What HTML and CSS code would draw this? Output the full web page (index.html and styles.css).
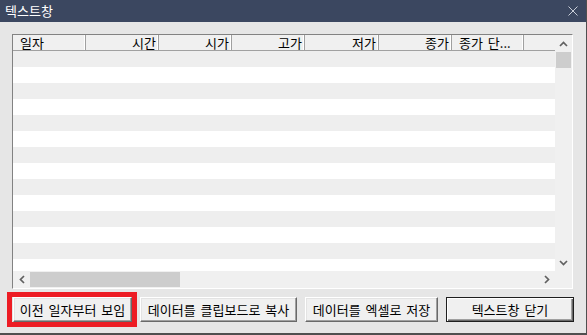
FILE: index.html
```html
<!DOCTYPE html>
<html>
  <head>
    <title>텍스트창</title>
    <link rel="stylesheet" href="styles.css">
  </head>
  <body>
    <div class="window">
      <div class="titlebar">
        <span class="title">텍스트창</span>
        <svg class="close" width="10" height="10" viewBox="0 0 10 10">
          <path d="M0.5 0.5 L9.5 9.5 M9.5 0.5 L0.5 9.5" stroke="#c9ced8" stroke-width="1" fill="none" />
        </svg>
      </div>
      <div class="dialog">
        <div class="listbox">
          <div class="list-main">
            <div class="list-header">
              <div class="col w73 left">일자</div>
              <div class="col w73">시간</div>
              <div class="col w73">시가</div>
              <div class="col w73">고가</div>
              <div class="col w74">저가</div>
              <div class="col w73">종가</div>
              <div class="col w72 left">종가 단...</div>
              <div class="col fill"></div>
            </div>
            <div class="rows">
              <div class="row"></div>
              <div class="row"></div>
              <div class="row"></div>
              <div class="row"></div>
              <div class="row"></div>
              <div class="row"></div>
              <div class="row"></div>
              <div class="row"></div>
              <div class="row"></div>
              <div class="row"></div>
              <div class="row"></div>
              <div class="row"></div>
              <div class="row"></div>
              <div class="row"></div>
            </div>
          </div>
          <div class="vscroll">
            <div class="arrow">
              <svg width="9" height="6" viewBox="0 0 9 6"><polyline points="1,5 4.5,1.5 8,5" stroke="#606060" stroke-width="1.7" fill="none" /></svg>
            </div>
            <div class="vthumb"></div>
            <div class="track"></div>
            <div class="arrow">
              <svg width="9" height="6" viewBox="0 0 9 6"><polyline points="1,1 4.5,4.5 8,1" stroke="#606060" stroke-width="1.7" fill="none" /></svg>
            </div>
          </div>
          <div class="hscroll">
            <div class="arrow">
              <svg width="6" height="9" viewBox="0 0 6 9"><polyline points="5,1 1.5,4.5 5,8" stroke="#606060" stroke-width="1.7" fill="none" /></svg>
            </div>
            <div class="hthumb"></div>
            <div class="track"></div>
            <div class="arrow">
              <svg width="6" height="9" viewBox="0 0 6 9"><polyline points="1,1 4.5,4.5 1,8" stroke="#606060" stroke-width="1.7" fill="none" /></svg>
            </div>
          </div>
          <div class="corner"></div>
        </div>
        <div class="buttons">
          <span class="highlight">
            <button class="btn w119">이전 일자부터 보임</button>
          </span>
          <button class="btn w157">데이터를 클립보드로 복사</button>
          <button class="btn w133">데이터를 엑셀로 저장</button>
          <button class="btn btn-default w128">텍스트창 닫기</button>
        </div>
      </div>
    </div>
  </body>
</html>
```

FILE: styles.css
```css
body {
  margin: 0;
  font-family: "Noto Sans CJK KR", "Noto Sans", sans-serif;
  font-size: 13px;
  word-spacing: 2px;
  color: #000;
  background: #e6e6e6;
}
.window {
  width: 586px;
  height: 333px;
  display: flex;
  flex-direction: column;
  background: #e6e6e6;
  border-right: 1px solid #4f4f4f;
  border-bottom: 2px solid #4f4f4f;
}
.titlebar {
  height: 22px;
  flex: none;
  background: #3b4760;
  color: #fff;
  display: flex;
  align-items: center;
  justify-content: space-between;
  padding: 0 8px 0 5px;
}
.title {
  font-size: 13px;
  line-height: 22px;
}
.dialog {
  flex: 1;
  padding: 12px 0 0 12px;
}
.listbox {
  width: 559px;
  height: 253px;
  border: 1px solid;
  border-color: #828282 #fff #fff #828282;
  display: grid;
  grid-template-columns: 542px 17px;
  grid-template-rows: 236px 17px;
  background: #fff;
}
.list-main {
  display: flex;
  flex-direction: column;
  min-height: 0;
}
.list-header {
  display: flex;
  height: 15px;
  flex: none;
  border-bottom: 1px solid #a0a0a0;
  background: #f0f0f0;
}
.col {
  height: 15px;
  line-height: 16px;
  text-align: right;
  padding-right: 3px;
  box-sizing: border-box;
  white-space: nowrap;
  box-shadow: inset -1px 0 #a0a0a0, inset -2px 0 #fff;
}
.col.left {
  text-align: left;
  padding-left: 7px;
}
.col.fill {
  width: 31px;
  box-shadow: none;
}
.w72 { width: 72px; }
.w73 { width: 73px; }
.w74 { width: 74px; }
.rows {
  flex: 1;
  min-height: 0;
  overflow: hidden;
}
.row {
  height: 16px;
  background: #fff;
}
.row:nth-child(odd) {
  background: #eeeeee;
}
.vscroll {
  display: flex;
  flex-direction: column;
  background: #f0f0f0;
}
.hscroll {
  display: flex;
  background: #f0f0f0;
}
.arrow {
  width: 17px;
  height: 17px;
  flex: none;
  display: flex;
  align-items: center;
  justify-content: center;
}
.vthumb {
  height: 16px;
  margin: 0 1px;
  background: #cdcdcd;
}
.hthumb {
  width: 150px;
  margin: 1px 0;
  background: #cdcdcd;
}
.track {
  flex: 1;
}
.corner {
  background: #f0f0f0;
}
.buttons {
  display: flex;
  gap: 8px;
  margin-top: 8px;
  padding-left: 1px;
}
.highlight {
  position: relative;
  display: flex;
}
.highlight::after {
  content: "";
  position: absolute;
  top: -5px;
  bottom: -5px;
  left: -6px;
  right: -5px;
  border: 5px solid #ed1c24;
}
.btn {
  height: 25px;
  padding: 0;
  font-family: inherit;
  font-size: 13px;
  word-spacing: 2px;
  color: #000;
  background: #f0f0f0;
  border: 1px solid;
  border-color: #fff #696969 #696969 #fff;
  box-shadow: inset -1px -1px #a0a0a0, inset 1px 1px #e3e3e3;
}
.btn-default {
  border: 1px solid #1e1e1e;
  box-shadow: inset 1px 1px #fff, inset -1px -1px #696969, inset -2px -2px #a0a0a0;
}
.w119 { width: 119px; }
.w157 { width: 157px; }
.w133 { width: 133px; }
.w128 { width: 128px; }
```
